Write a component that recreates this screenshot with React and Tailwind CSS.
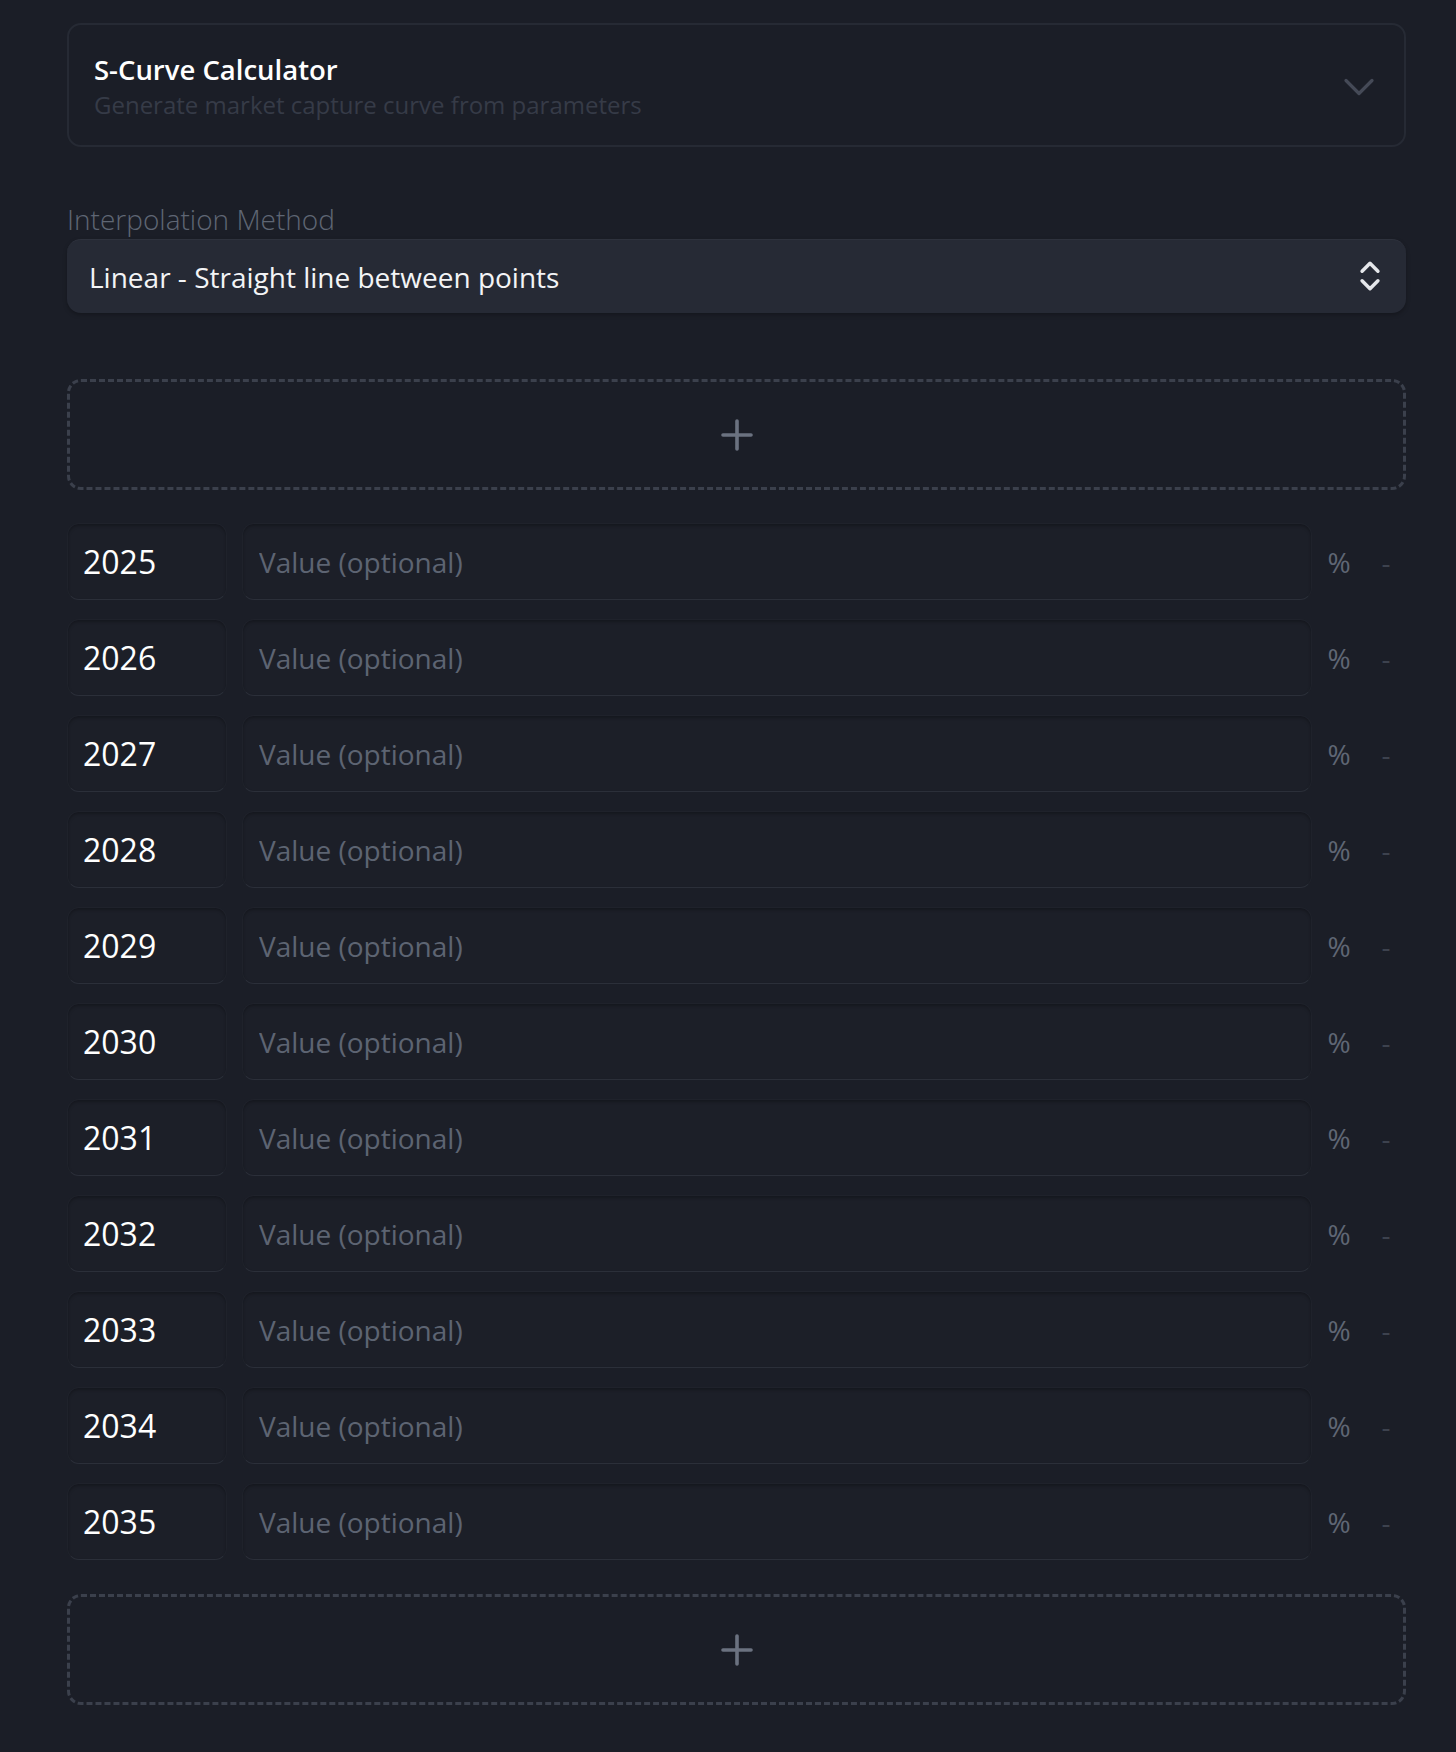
import React, { useState } from "react";
import { ChevronDown, ChevronsUpDown, Plus } from "lucide-react";

const YEARS = [2025, 2026, 2027, 2028, 2029, 2030, 2031, 2032, 2033, 2034, 2035];

function AddRowButton({ onClick }) {
  return (
    <button
      onClick={onClick}
      className="w-full h-[111px] flex items-center justify-center rounded-[14px] border-[3px] border-dashed border-[#3b404c] hover:border-[#4b5160] transition-colors"
    >
      <Plus className="w-[48px] h-[48px] text-[#6b7280]" strokeWidth={1.8} />
    </button>
  );
}

function PointRow({ year, value, onChange }) {
  return (
    <div className="flex items-center h-[77px]">
      {/* year */}
      <div className="w-[160px] h-full flex items-center pl-[15px] rounded-[12px] bg-[#1c1f28] border border-[#1f222b] border-b-[#2b2f39] shadow-[inset_0_2px_3px_rgba(0,0,0,0.25)]">
        <span className="text-[32px] text-white">{year}</span>
      </div>

      {/* value */}
      <input
        value={value}
        onChange={(e) => onChange(e.target.value)}
        placeholder="Value (optional)"
        className="ml-[15px] flex-1 h-full px-[16px] rounded-[12px] bg-[#1c1f28] border border-[#1f222b] border-b-[#2b2f39] shadow-[inset_0_2px_3px_rgba(0,0,0,0.25)] text-[28px] text-white placeholder:text-[#5d6472] outline-none"
      />

      <span className="w-[54px] text-center text-[28px] text-[#5f6674]">%</span>
      <button className="w-[40px] text-center text-[28px] text-[#3d424e]">-</button>
    </div>
  );
}

export default function App() {
  const [values, setValues] = useState(() => YEARS.map(() => ""));
  const [method, setMethod] = useState("linear");

  const setValue = (i, v) => {
    setValues((prev) => prev.map((p, j) => (j === i ? v : p)));
  };

  return (
    <div
      className="min-h-[1752px] bg-[#1b1e27] pl-[67px] pr-[50px] pt-[23px] pb-[46px]"
      style={{ fontFamily: '"Open Sans", "Noto Sans", sans-serif' }}
    >
      {/* CALCULATOR HEADER */}
      <div className="h-[124px] flex items-center justify-between pl-[25px] pr-[19px] rounded-[14px] border-2 border-[#262a34]">
        <div className="flex flex-col pt-[4px]">
          <span className="text-[27.5px] leading-[36px] font-semibold text-white">
            S-Curve Calculator
          </span>
          <span className="text-[24px] leading-[34px] text-[#363b47]">
            Generate market capture curve from parameters
          </span>
        </div>
        <ChevronDown className="w-[52px] h-[52px] text-[#454a57] mt-[4px]" strokeWidth={1.5} />
      </div>

      {/* INTERPOLATION */}
      <div className="mt-[54px]">
        <label className="block text-[28px] leading-[36px] font-light text-[#5f6674] mb-[2px]">
          Interpolation Method
        </label>
        <div className="relative">
          <select
            value={method}
            onChange={(e) => setMethod(e.target.value)}
            className="appearance-none w-full h-[74px] pl-[22px] pr-[60px] rounded-[14px] bg-[#262a35] border-t border-[#2e323d] text-[28px] font-medium text-[#f3f4f6] outline-none shadow-[0_2px_4px_rgba(0,0,0,0.25)]"
          >
            <option value="linear">Linear - Straight line between points</option>
            <option value="cubic">Cubic - Smooth curve through points</option>
          </select>
          <ChevronsUpDown className="absolute right-[17px] top-1/2 -translate-y-1/2 w-[38px] h-[38px] text-[#e5e7eb] pointer-events-none" strokeWidth={2.2} />
        </div>
      </div>

      {/* DATA POINTS */}
      <div className="mt-[66px]">
        <AddRowButton />
      </div>

      <div className="mt-[33px] flex flex-col gap-[19px]">
        {YEARS.map((year, i) => (
          <PointRow key={year} year={year} value={values[i]} onChange={(v) => setValue(i, v)} />
        ))}
      </div>

      <div className="mt-[34px]">
        <AddRowButton />
      </div>
    </div>
  );
}
